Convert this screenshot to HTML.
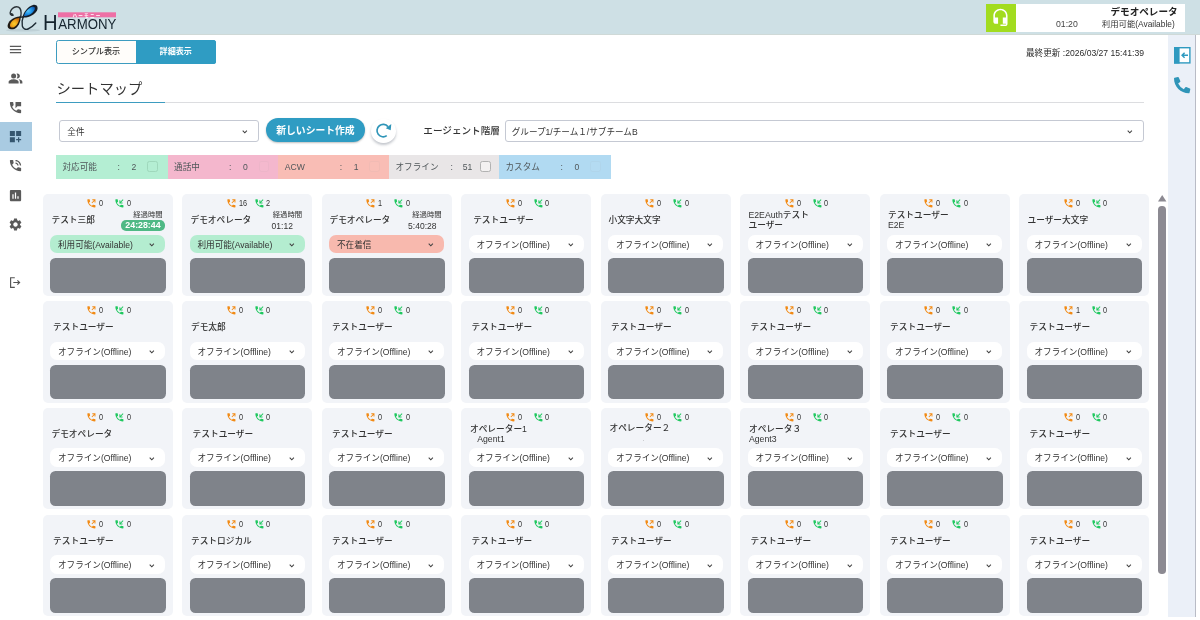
<!DOCTYPE html><html lang="ja"><head><meta charset="utf-8"><title>シートマップ</title><style>
*{box-sizing:border-box;margin:0;padding:0}
html,body{width:1200px;height:620px;overflow:hidden;background:#fff}
body{will-change:transform;position:relative;font-family:"Liberation Sans","Noto Sans CJK JP",sans-serif;color:#333;font-size:8.75px;line-height:1.2}
.abs,.ic{position:absolute}
.ic{display:block;overflow:visible}
.t{position:absolute;white-space:nowrap;line-height:1}
#hdr{left:0;top:0;width:1200px;height:35px;background:#cee0e5;border-bottom:1px solid #cfd9d7}
#side{left:0;top:35px;width:32px;height:585px;background:#fff}
#act{left:0;top:122px;width:32px;height:29px;background:#a9cbe2}
#rp{left:1168px;top:35px;width:28px;height:582px;background:#ebf0f8;border-right:1.5px solid #b9bcc6}
.card{position:absolute;width:129.8px;height:101.5px;background:#f2f4f8;border-radius:5px}
.in{position:absolute;left:2.2px;top:0;width:126px;height:101px}
.sel{position:absolute;left:5.5px;top:40.5px;width:115px;height:18.6px;border-radius:7px;background:#fff}
.sel.g{background:#b4edd0}
.sel.r{background:#f8b9ae}
.sel .t{left:7.5px;top:6.1px;font-size:8.6px}
.box{position:absolute;left:5.5px;top:63.6px;width:115.4px;height:34.6px;border-radius:5.5px;background:#7f838a}
.nm{position:absolute;top:15.6px;height:21px;display:flex;align-items:center;font-size:8.7px;font-weight:500;line-height:10.2px;white-space:nowrap;margin-left:.5px}
.cnt{position:absolute;top:5.1px;font-size:8.5px;line-height:8.5px;color:#333;transform:scaleX(.86);transform-origin:0 50%}
.chev{position:absolute}
.seg{position:absolute;top:154.8px;height:24px}
.seg .t{top:8px;font-size:8.6px;color:#50575a}
.cb{position:absolute;top:6.6px;width:10.6px;height:10.4px;border:1px solid #b2b2b2;border-radius:2.4px;background:#f3f1f1}
</style></head><body>
<div id="hdr" class="abs"></div>
<svg class="ic" style="left:0;top:0;width:130px;height:35px" viewBox="0 0 130 35">
<defs>
<radialGradient id="gb" cx=".38" cy=".45" r=".7"><stop offset="0" stop-color="#5cc4f6"/><stop offset=".45" stop-color="#2196e8"/><stop offset="1" stop-color="#0b4fa8"/></radialGradient>
<radialGradient id="go" cx=".45" cy=".6" r=".65"><stop offset="0" stop-color="#f9cf2e"/><stop offset=".5" stop-color="#f0a318"/><stop offset="1" stop-color="#c8680c"/></radialGradient>
</defs>
<ellipse cx="23" cy="30.200" rx="17" ry="1.400" fill="#aebfc7" opacity=".5"/>
<path d="M20.700 16.700C16 15.900 8.800 19.700 7.700 25C7 29.100 11 30.100 14.300 28.900C18 27.500 20.900 21.500 20.700 16.700Z" fill="#1f1a14"/>
<path d="M19.400 18.100C16 17.900 11 20.800 10 24.700C9.500 27.400 11.900 27.900 14 27.200C16.700 26.100 19.200 21.800 19.400 18.100Z" fill="url(#go)"/>
<path d="M13.200 15.100C11.600 15.600 9.900 14.600 10.200 12.500C10.700 9.500 13.500 6.700 16.500 6.700C19.600 6.700 21.100 9.500 21.100 13C21.100 15 20.800 16.300 20.400 17.200" fill="none" stroke="#2a3237" stroke-width="1.400" stroke-linecap="round"/>
<ellipse cx="11.700" cy="14.300" rx="1.700" ry="1.250" transform="rotate(25 11.700 14.300)" fill="#2a3237"/>
<path d="M22.500 17.400C23 12.500 28 6.200 33 4.900C37.200 4.100 38.400 7.500 37 10.400C35.200 14.100 29 18.100 22.500 17.400Z" fill="#141c26"/>
<path d="M23.900 16.100C24.700 12.500 28.400 7.900 32.300 6.800C34.900 6.200 35.500 8.100 34.500 10C33.100 12.900 28.800 16.100 23.900 16.100Z" fill="url(#gb)"/>
<path d="M23.300 16.500C22.300 19 21.600 23 22.300 26C23 28.800 25.500 30 28 29C31 27.800 33.800 25.300 35.800 23" fill="none" stroke="#1d2a33" stroke-width="1.350" stroke-linecap="round"/>
<path d="M19.500 17.200L23.800 17" fill="none" stroke="#1d2226" stroke-width="1.300"/>
<rect x="58" y="12.3" width="58" height="5" fill="#ee6fa5"/>
<text x="87" y="16.6" font-size="4.6" font-weight="700" fill="#fff" text-anchor="middle" font-family='"Liberation Sans","Noto Sans CJK JP",sans-serif' letter-spacing="1.2">ハーモニー</text>
<text x="43" y="29.700" font-size="22.800" fill="#14232d" font-family='"Liberation Sans",sans-serif' textLength="14.6" lengthAdjust="spacingAndGlyphs">H</text>
<text x="58.300" y="29.400" font-size="14.400" fill="#14232d" font-family='"Liberation Sans",sans-serif' textLength="58" lengthAdjust="spacingAndGlyphs">ARMONY</text>
</svg>
<div class="abs" style="left:986px;top:4.2px;width:199px;height:27.4px;background:#fff"></div>
<div class="abs" style="left:986px;top:4.2px;width:30px;height:27.4px;background:#a2dc1f"></div>
<svg class="ic" style="left:991.450px;top:8.000px;width:18.900px;height:18.900px" viewBox="0 0 24 24"><path fill="#fff" d="M12 1c-4.970 0-9 4.030-9 9v7c0 1.660 1.340 3 3 3h3v-8H5v-2c0-3.870 3.130-7 7-7s7 3.130 7 7v2h-4v8h4v1h-7v2h6c1.660 0 3-1.340 3-3V10c0-4.970-4.030-9-9-9z"/></svg>
<div class="t" style="right:22.400px;top:6.900px;font-size:9.600px;font-weight:700;color:#222">デモオペレータ</div>
<div class="t" style="right:25.300px;top:20.200px;font-size:8.400px;color:#333">利用可能(Available)</div>
<div class="t" style="left:1056px;top:20px;font-size:8.700px;color:#444">01:20</div>
<div id="side" class="abs"></div><div id="act" class="abs"></div>
<svg class="ic" style="left:7.50px;top:41.70px;width:15px;height:15px" viewBox="0 0 24 24"><path fill="#5a5a5a" d="M3 18h18v-2H3v2zm0-5h18v-2H3v2zm0-7v2h18V6H3z"/></svg>
<svg class="ic" style="left:7.50px;top:70.70px;width:15px;height:15px" viewBox="0 0 24 24"><path fill="#5a5a5a" d="M16.67 13.13C18.04 14.06 19 15.32 19 17v3h4v-3c0-2.18-3.57-3.47-6.33-3.87zM9 4a4 4 0 1 0 0 8 4 4 0 0 0 0-8zM15 12c2.21 0 4-1.79 4-4s-1.79-4-4-4c-.47 0-.91.1-1.33.24a5.98 5.98 0 0 1 0 7.52c.42.14.86.24 1.33.24zM9 13c-2.67 0-8 1.34-8 4v3h16v-3c0-2.66-5.33-4-8-4z"/></svg>
<svg class="ic" style="left:8.00px;top:99.70px;width:15px;height:15px" viewBox="0 0 24 24"><path fill="#5a5a5a" d="M20 15.5c-1.250 0-2.450-.2-3.570-.57-.35-.11-.74-.03-1.020.24l-2.200 2.200c-2.830-1.440-5.150-3.750-6.590-6.580l2.200-2.210c.28-.27.36-.66.25-1.010C8.700 6.450 8.500 5.250 8.500 4c0-.55-.45-1-1-1H4c-.55 0-1 .45-1 1 0 9.390 7.610 17 17 17 .55 0 1-.45 1-1v-3.500c0-.55-.45-1-1-1zM12 3v10l3-3h6V3h-9z"/></svg>
<svg class="ic" style="left:7.50px;top:129.30px;width:15px;height:15px" viewBox="0 0 24 24"><path fill="#35566f" d="M3 3h8v8H3zm10 0h8v8h-8zM3 13h8v8H3zm15 0h-2v3h-3v2h3v3h2v-3h3v-2h-3z"/></svg>
<svg class="ic" style="left:7.50px;top:158.00px;width:15px;height:15px" viewBox="0 0 24 24"><path fill="#5a5a5a" d="M20 15.5c-1.250 0-2.450-.2-3.570-.57-.35-.11-.74-.03-1.020.24l-2.200 2.200c-2.830-1.440-5.150-3.750-6.590-6.590l2.200-2.210c.28-.26.36-.65.25-1C8.700 6.450 8.500 5.250 8.500 4c0-.55-.45-1-1-1H4c-.55 0-1 .45-1 1 0 9.390 7.610 17 17 17 .55 0 1-.45 1-1v-3.500c0-.55-.45-1-1-1zM19 12h2c0-4.970-4.030-9-9-9v2c3.870 0 7 3.130 7 7zm-4 0h2c0-2.760-2.240-5-5-5v2c1.660 0 3 1.340 3 3z"/></svg>
<svg class="ic" style="left:7.50px;top:187.50px;width:15px;height:15px" viewBox="0 0 24 24"><path fill="#5a5a5a" d="M19 3H5c-1.100 0-2 .9-2 2v14c0 1.100.9 2 2 2h14c1.100 0 2-.9 2-2V5c0-1.100-.9-2-2-2zM9 17H7v-7h2v7zm4 0h-2V7h2v10zm4 0h-2v-4h2v4z"/></svg>
<svg class="ic" style="left:7.60px;top:216.50px;width:15px;height:15px" viewBox="0 0 24 24"><path fill="#5a5a5a" d="M19.14 12.94c.04-.3.06-.61.06-.94 0-.32-.02-.64-.07-.94l2.030-1.580c.18-.14.23-.41.12-.61l-1.920-3.320c-.12-.22-.37-.29-.59-.22l-2.390.96c-.5-.38-1.030-.7-1.620-.94l-.36-2.540c-.04-.24-.24-.41-.48-.41h-3.840c-.24 0-.43.17-.47.41l-.36 2.540c-.59.24-1.130.57-1.620.94l-2.390-.96c-.22-.08-.47 0-.59.22L2.740 8.870c-.12.21-.08.47.12.61l2.030 1.580c-.05.3-.09.63-.09.94s.02.64.07.94l-2.030 1.580c-.18.14-.23.41-.12.61l1.920 3.320c.12.22.37.29.59.22l2.390-.96c.5.38 1.030.7 1.620.94l.36 2.540c.05.24.24.41.48.41h3.840c.24 0 .44-.17.47-.41l.36-2.540c.59-.24 1.130-.56 1.620-.94l2.390.96c.22.08.47 0 .59-.22l1.920-3.320c.12-.22.07-.47-.12-.61l-2.010-1.580zM12 15.600c-1.980 0-3.600-1.620-3.600-3.600s1.620-3.600 3.600-3.600 3.600 1.620 3.600 3.600-1.620 3.600-3.600 3.600z"/></svg>
<svg class="ic" style="left:8.500px;top:275.500px;width:13px;height:13px" viewBox="0 0 13 13"><path d="M5.800 1.700H1.600v9.600h4.200M4.300 6.500h6.200M8.400 4.400l2.200 2.100-2.200 2.100" fill="none" stroke="#555" stroke-width="1.150"/></svg>
<div id="rp" class="abs"></div>
<svg class="ic" style="left:1173.800px;top:47.400px;width:16.600px;height:16.600px" viewBox="0 0 16.600 16.600"><rect x=".7" y=".7" width="15.200" height="15.200" fill="#fff" stroke="#2f9ac0" stroke-width="1.400"/><rect x="0" y="0" width="5.600" height="16.600" fill="#2f9ac0"/><path d="M14 8.300H8.300M10.600 5.800L8.100 8.300l2.500 2.500" fill="none" stroke="#2f9ac0" stroke-width="1.500"/></svg>
<svg class="ic" style="left:1173.900px;top:76.500px;width:16.300px;height:16.300px" viewBox="0 0 512 512"><path fill="#2f95b8" d="M497.390 361.800l-112-48a24 24 0 0 0-28 6.900l-49.600 60.600A370.660 370.660 0 0 1 130.600 204.110l60.600-49.600a23.940 23.940 0 0 0 6.900-28l-48-112A24.160 24.160 0 0 0 122.600.610l-104 24A24 24 0 0 0 0 48c0 256.500 207.900 464 464 464a24 24 0 0 0 23.400-18.600l24-104a24.290 24.290 0 0 0-14.010-27.600z"/></svg>
<div class="abs" style="left:56px;top:40px;width:159.500px;height:24px;border:1px solid #3d9cc0;border-radius:2.500px;background:#fffdfa"></div>
<div class="abs" style="left:136px;top:40px;width:79.500px;height:24px;background:#2f9cc3;border-radius:0 2.500px 2.500px 0"></div>
<div class="t" style="left:56px;width:80px;text-align:center;top:47.700px;font-size:8.150px;font-weight:500;color:#333">シンプル表示</div>
<div class="t" style="left:136px;width:79.500px;text-align:center;top:47.700px;font-size:8.100px;font-weight:700;color:#fff">詳細表示</div>
<div class="t" style="right:56px;top:48.800px;font-size:8.600px;color:#2c2c2c">最終更新 :2026/03/27 15:41:39</div>
<div class="t" style="left:56.500px;top:82px;font-size:14.300px;color:#333">シートマップ</div>
<div class="abs" style="left:56px;top:101.900px;width:1088px;height:1.200px;background:#dcdde0"></div>
<div class="abs" style="left:56px;top:101.600px;width:109px;height:1.600px;background:#3d9cc0"></div>
<div class="abs" style="left:59.300px;top:120px;width:200px;height:21.600px;border:1px solid #c5c9d3;border-radius:3px;background:#fff"></div>
<div class="t" style="left:67.300px;top:127.600px;font-size:8.600px;color:#333">全件</div>
<svg class="ic" style="left:242px;top:130.3px;width:5.600px;height:3.600px" viewBox="0 0 5.600 3.600"><path d="M.7.700l2.100 2.100L4.900.700" fill="none" stroke="#444" stroke-width="1.100"/></svg>
<div class="abs" style="left:265.700px;top:118.400px;width:99.500px;height:23.500px;border-radius:12px;background:#2f9cc3;box-shadow:0 1px 2px rgba(0,0,0,.25)"></div>
<div class="t" style="left:265.700px;width:99.500px;text-align:center;top:126.200px;font-size:9.800px;font-weight:700;color:#fff">新しいシート作成</div>
<div class="abs" style="left:371.400px;top:119.300px;width:24.200px;height:23.600px;border-radius:50%;background:#fff;box-shadow:0 2px 2.500px rgba(60,70,90,.3)"></div>
<svg class="ic" style="left:371px;top:119px;width:25px;height:25px" viewBox="371 119 25 25"><path d="M387.950 126.600A6.200 6.200 0 1 0 386.760 135.680" fill="none" stroke="#2f95b8" stroke-width="1.650"/><path d="M391.300 124.100L390.700 130.300L385.800 128.300z" fill="#2f95b8"/></svg>
<div class="t" style="left:423.300px;top:126px;font-size:9.600px;font-weight:500;color:#333">エージェント階層</div>
<div class="abs" style="left:505px;top:120px;width:639px;height:21.600px;border:1px solid #c5c9d3;border-radius:3px;background:#fff"></div>
<div class="t" style="left:511.700px;top:127.600px;font-size:8.600px;color:#333">グループ1/チーム１/サブチームB</div>
<svg class="ic" style="left:1127.2px;top:130.3px;width:5.600px;height:3.600px" viewBox="0 0 5.600 3.600"><path d="M.7.700l2.100 2.100L4.900.700" fill="none" stroke="#444" stroke-width="1.100"/></svg>
<div class="seg" style="left:56px;width:111.6px;background:#b4eed3">
<div class="t" style="left:6.500px">対応可能</div><div class="t" style="left:61.500px">:</div>
<div class="t" style="left:75.500px">2</div>
<div class="cb" style="left:91px;border-color:#9fd8bc;background:transparent"></div>
</div>
<div class="seg" style="left:167.6px;width:110.6px;background:#f4b7cd">
<div class="t" style="left:6.500px">通話中</div><div class="t" style="left:61.500px">:</div>
<div class="t" style="left:75.500px">0</div>
<div class="cb" style="left:91px;border-color:rgba(120,120,120,.06);background:rgba(255,255,255,.04)"></div>
</div>
<div class="seg" style="left:278.2px;width:110.8px;background:#f9bdb5">
<div class="t" style="left:6.500px">ACW</div><div class="t" style="left:61.500px">:</div>
<div class="t" style="left:75.500px">1</div>
<div class="cb" style="left:91px;border-color:rgba(120,120,120,.06);background:rgba(255,255,255,.04)"></div>
</div>
<div class="seg" style="left:389px;width:110px;background:#e9e6e7">
<div class="t" style="left:6.500px">オフライン</div><div class="t" style="left:61.500px">:</div>
<div class="t" style="left:73.800px">51</div>
<div class="cb" style="left:91px"></div>
</div>
<div class="seg" style="left:499px;width:112.3px;background:#b1daf2">
<div class="t" style="left:6.500px">カスタム</div><div class="t" style="left:61.500px">:</div>
<div class="t" style="left:75.500px">0</div>
<div class="cb" style="left:91px;border-color:rgba(120,120,120,.06);background:rgba(255,255,255,.04)"></div>
</div>
<div class="card" style="left:42.80px;top:194.40px"><div class="in">
<svg class="ic" style="left:41.5px;top:3.900px;width:10.800px;height:10.800px" viewBox="0 0 24 24"><path fill="#f28a14" d="M6.620 10.790c1.440 2.830 3.760 5.140 6.590 6.590l2.200-2.200c.27-.27.67-.36 1.020-.24 1.120.37 2.330.57 3.570.57.55 0 1 .45 1 1V20c0 .55-.45 1-1 1-9.390 0-17-7.610-17-17 0-.55.45-1 1-1h3.500c.55 0 1 .45 1 1 0 1.250.2 2.450.57 3.570.11.35.03.74-.25 1.020l-2.200 2.200z"/><path fill="#f28a14" d="M14 3h7v7h-2V6.400l-5.300 5.300-1.400-1.400L17.600 5H14z"/></svg>
<div class="cnt" style="left:54.300px">0</div>
<svg class="ic" style="left:69.3px;top:3.900px;width:10.800px;height:10.800px" viewBox="0 0 24 24"><path fill="#1fc85f" d="M6.620 10.790c1.440 2.830 3.760 5.140 6.590 6.590l2.200-2.200c.27-.27.67-.36 1.020-.24 1.120.37 2.330.57 3.570.57.55 0 1 .45 1 1V20c0 .55-.45 1-1 1-9.390 0-17-7.610-17-17 0-.55.45-1 1-1h3.500c.55 0 1 .45 1 1 0 1.250.2 2.450.57 3.570.11.35.03.74-.25 1.020l-2.200 2.200z"/><path fill="#1fc85f" d="M21 4.400L19.600 3 14 8.600V5h-2v7h7v-2h-3.600z"/></svg>
<div class="cnt" style="left:81.600px">0</div>
<div class="nm" style="left:6px"><div>テスト三郎</div></div>
<div class="t" style="left:73px;width:60px;text-align:center;top:16.800px;font-size:7.400px;color:#333">経過時間</div>
<div class="t" style="left:75.800px;width:44.400px;height:10.200px;top:26px;border-radius:5.100px;background:#4fb985;color:#fff;font-weight:700;font-size:8.800px;text-align:center;line-height:10.200px">24:28:44</div>
<div class="sel g"><div class="t">利用可能(Available)</div><svg class="ic" style="left:98.8px;top:8.5px;width:5.600px;height:3.600px" viewBox="0 0 5.600 3.600"><path d="M.7.700l2.100 2.100L4.900.700" fill="none" stroke="#444" stroke-width="1.100"/></svg></div>
<div class="box"></div></div></div>
<div class="card" style="left:182.30px;top:194.40px"><div class="in">
<svg class="ic" style="left:41.5px;top:3.900px;width:10.800px;height:10.800px" viewBox="0 0 24 24"><path fill="#f28a14" d="M6.620 10.790c1.440 2.830 3.760 5.140 6.590 6.590l2.200-2.200c.27-.27.67-.36 1.020-.24 1.120.37 2.330.57 3.570.57.55 0 1 .45 1 1V20c0 .55-.45 1-1 1-9.390 0-17-7.610-17-17 0-.55.45-1 1-1h3.500c.55 0 1 .45 1 1 0 1.250.2 2.450.57 3.570.11.35.03.74-.25 1.020l-2.200 2.200z"/><path fill="#f28a14" d="M14 3h7v7h-2V6.400l-5.300 5.300-1.400-1.400L17.600 5H14z"/></svg>
<div class="cnt" style="left:54.300px">16</div>
<svg class="ic" style="left:69.3px;top:3.900px;width:10.800px;height:10.800px" viewBox="0 0 24 24"><path fill="#1fc85f" d="M6.620 10.790c1.440 2.830 3.760 5.140 6.590 6.590l2.200-2.200c.27-.27.67-.36 1.020-.24 1.120.37 2.330.57 3.570.57.55 0 1 .45 1 1V20c0 .55-.45 1-1 1-9.390 0-17-7.610-17-17 0-.55.45-1 1-1h3.500c.55 0 1 .45 1 1 0 1.250.2 2.450.57 3.570.11.35.03.74-.25 1.020l-2.200 2.200z"/><path fill="#1fc85f" d="M21 4.400L19.600 3 14 8.600V5h-2v7h7v-2h-3.600z"/></svg>
<div class="cnt" style="left:81.600px">2</div>
<div class="nm" style="left:5.5px"><div>デモオペレータ</div></div>
<div class="t" style="left:73px;width:60px;text-align:center;top:16.800px;font-size:7.400px;color:#333">経過時間</div>
<div class="t" style="left:68px;width:60px;text-align:center;top:26.200px;font-size:9.800px;color:#333"><span style="display:inline-block;transform:scaleX(.87)">01:12</span></div>
<div class="sel g"><div class="t">利用可能(Available)</div><svg class="ic" style="left:98.8px;top:8.5px;width:5.600px;height:3.600px" viewBox="0 0 5.600 3.600"><path d="M.7.700l2.100 2.100L4.900.700" fill="none" stroke="#444" stroke-width="1.100"/></svg></div>
<div class="box"></div></div></div>
<div class="card" style="left:321.80px;top:194.40px"><div class="in">
<svg class="ic" style="left:41.5px;top:3.900px;width:10.800px;height:10.800px" viewBox="0 0 24 24"><path fill="#f28a14" d="M6.620 10.790c1.440 2.830 3.760 5.140 6.590 6.590l2.200-2.200c.27-.27.67-.36 1.020-.24 1.120.37 2.330.57 3.570.57.55 0 1 .45 1 1V20c0 .55-.45 1-1 1-9.390 0-17-7.610-17-17 0-.55.45-1 1-1h3.500c.55 0 1 .45 1 1 0 1.250.2 2.450.57 3.570.11.35.03.74-.25 1.020l-2.200 2.200z"/><path fill="#f28a14" d="M14 3h7v7h-2V6.400l-5.300 5.300-1.400-1.400L17.600 5H14z"/></svg>
<div class="cnt" style="left:54.300px">1</div>
<svg class="ic" style="left:69.3px;top:3.900px;width:10.800px;height:10.800px" viewBox="0 0 24 24"><path fill="#1fc85f" d="M6.620 10.790c1.440 2.830 3.760 5.140 6.590 6.590l2.200-2.200c.27-.27.67-.36 1.020-.24 1.120.37 2.330.57 3.570.57.55 0 1 .45 1 1V20c0 .55-.45 1-1 1-9.390 0-17-7.610-17-17 0-.55.45-1 1-1h3.500c.55 0 1 .45 1 1 0 1.250.2 2.450.57 3.570.11.35.03.74-.25 1.020l-2.200 2.200z"/><path fill="#1fc85f" d="M21 4.400L19.600 3 14 8.600V5h-2v7h7v-2h-3.600z"/></svg>
<div class="cnt" style="left:81.600px">0</div>
<div class="nm" style="left:5px"><div>デモオペレータ</div></div>
<div class="t" style="left:73px;width:60px;text-align:center;top:16.800px;font-size:7.400px;color:#333">経過時間</div>
<div class="t" style="left:68px;width:60px;text-align:center;top:26.200px;font-size:9.800px;color:#333"><span style="display:inline-block;transform:scaleX(.87)">5:40:28</span></div>
<div class="sel r"><div class="t">不在着信</div><svg class="ic" style="left:98.8px;top:8.5px;width:5.600px;height:3.600px" viewBox="0 0 5.600 3.600"><path d="M.7.700l2.100 2.100L4.900.700" fill="none" stroke="#444" stroke-width="1.100"/></svg></div>
<div class="box"></div></div></div>
<div class="card" style="left:461.30px;top:194.40px"><div class="in">
<svg class="ic" style="left:41.5px;top:3.900px;width:10.800px;height:10.800px" viewBox="0 0 24 24"><path fill="#f28a14" d="M6.620 10.790c1.440 2.830 3.760 5.140 6.590 6.590l2.200-2.200c.27-.27.67-.36 1.020-.24 1.120.37 2.330.57 3.570.57.55 0 1 .45 1 1V20c0 .55-.45 1-1 1-9.390 0-17-7.610-17-17 0-.55.45-1 1-1h3.500c.55 0 1 .45 1 1 0 1.250.2 2.450.57 3.570.11.35.03.74-.25 1.020l-2.200 2.200z"/><path fill="#f28a14" d="M14 3h7v7h-2V6.400l-5.300 5.300-1.400-1.400L17.600 5H14z"/></svg>
<div class="cnt" style="left:54.300px">0</div>
<svg class="ic" style="left:69.3px;top:3.900px;width:10.800px;height:10.800px" viewBox="0 0 24 24"><path fill="#1fc85f" d="M6.620 10.790c1.440 2.830 3.760 5.140 6.590 6.590l2.200-2.200c.27-.27.67-.36 1.020-.24 1.120.37 2.330.57 3.570.57.55 0 1 .45 1 1V20c0 .55-.45 1-1 1-9.390 0-17-7.610-17-17 0-.55.45-1 1-1h3.500c.55 0 1 .45 1 1 0 1.250.2 2.450.57 3.570.11.35.03.74-.25 1.020l-2.200 2.200z"/><path fill="#1fc85f" d="M21 4.400L19.600 3 14 8.600V5h-2v7h7v-2h-3.600z"/></svg>
<div class="cnt" style="left:81.600px">0</div>
<div class="nm" style="left:9.2px"><div>テストユーザー</div></div>
<div class="sel "><div class="t">オフライン(Offline)</div><svg class="ic" style="left:98.8px;top:8.5px;width:5.600px;height:3.600px" viewBox="0 0 5.600 3.600"><path d="M.7.700l2.100 2.100L4.900.700" fill="none" stroke="#444" stroke-width="1.100"/></svg></div>
<div class="box"></div></div></div>
<div class="card" style="left:600.80px;top:194.40px"><div class="in">
<svg class="ic" style="left:41.5px;top:3.900px;width:10.800px;height:10.800px" viewBox="0 0 24 24"><path fill="#f28a14" d="M6.620 10.790c1.440 2.830 3.760 5.140 6.590 6.590l2.200-2.200c.27-.27.67-.36 1.020-.24 1.120.37 2.330.57 3.570.57.55 0 1 .45 1 1V20c0 .55-.45 1-1 1-9.390 0-17-7.610-17-17 0-.55.45-1 1-1h3.500c.55 0 1 .45 1 1 0 1.250.2 2.450.57 3.570.11.35.03.74-.25 1.020l-2.200 2.200z"/><path fill="#f28a14" d="M14 3h7v7h-2V6.400l-5.300 5.300-1.400-1.400L17.600 5H14z"/></svg>
<div class="cnt" style="left:54.300px">0</div>
<svg class="ic" style="left:69.3px;top:3.900px;width:10.800px;height:10.800px" viewBox="0 0 24 24"><path fill="#1fc85f" d="M6.620 10.790c1.440 2.830 3.760 5.140 6.590 6.590l2.200-2.200c.27-.27.67-.36 1.020-.24 1.120.37 2.330.57 3.570.57.55 0 1 .45 1 1V20c0 .55-.45 1-1 1-9.390 0-17-7.610-17-17 0-.55.45-1 1-1h3.500c.55 0 1 .45 1 1 0 1.250.2 2.450.57 3.570.11.35.03.74-.25 1.020l-2.200 2.200z"/><path fill="#1fc85f" d="M21 4.400L19.600 3 14 8.600V5h-2v7h7v-2h-3.600z"/></svg>
<div class="cnt" style="left:81.600px">0</div>
<div class="nm" style="left:5px"><div>小文字大文字</div></div>
<div class="sel "><div class="t">オフライン(Offline)</div><svg class="ic" style="left:98.8px;top:8.5px;width:5.600px;height:3.600px" viewBox="0 0 5.600 3.600"><path d="M.7.700l2.100 2.100L4.900.700" fill="none" stroke="#444" stroke-width="1.100"/></svg></div>
<div class="box"></div></div></div>
<div class="card" style="left:740.30px;top:194.40px"><div class="in">
<svg class="ic" style="left:41.5px;top:3.900px;width:10.800px;height:10.800px" viewBox="0 0 24 24"><path fill="#f28a14" d="M6.620 10.790c1.440 2.830 3.760 5.140 6.590 6.590l2.200-2.200c.27-.27.67-.36 1.020-.24 1.120.37 2.330.57 3.570.57.55 0 1 .45 1 1V20c0 .55-.45 1-1 1-9.390 0-17-7.610-17-17 0-.55.45-1 1-1h3.500c.55 0 1 .45 1 1 0 1.250.2 2.450.57 3.570.11.35.03.74-.25 1.020l-2.200 2.200z"/><path fill="#f28a14" d="M14 3h7v7h-2V6.400l-5.300 5.300-1.400-1.400L17.600 5H14z"/></svg>
<div class="cnt" style="left:54.300px">0</div>
<svg class="ic" style="left:69.3px;top:3.900px;width:10.800px;height:10.800px" viewBox="0 0 24 24"><path fill="#1fc85f" d="M6.620 10.790c1.440 2.830 3.760 5.140 6.590 6.590l2.200-2.200c.27-.27.67-.36 1.020-.24 1.120.37 2.330.57 3.570.57.55 0 1 .45 1 1V20c0 .55-.45 1-1 1-9.390 0-17-7.610-17-17 0-.55.45-1 1-1h3.500c.55 0 1 .45 1 1 0 1.250.2 2.450.57 3.570.11.35.03.74-.25 1.020l-2.200 2.200z"/><path fill="#1fc85f" d="M21 4.400L19.600 3 14 8.600V5h-2v7h7v-2h-3.600z"/></svg>
<div class="cnt" style="left:81.600px">0</div>
<div class="nm" style="left:5.5px"><div>E2EAuthテスト<br>ユーザー</div></div>
<div class="sel "><div class="t">オフライン(Offline)</div><svg class="ic" style="left:98.8px;top:8.5px;width:5.600px;height:3.600px" viewBox="0 0 5.600 3.600"><path d="M.7.700l2.100 2.100L4.900.700" fill="none" stroke="#444" stroke-width="1.100"/></svg></div>
<div class="box"></div></div></div>
<div class="card" style="left:879.80px;top:194.40px"><div class="in">
<svg class="ic" style="left:41.5px;top:3.900px;width:10.800px;height:10.800px" viewBox="0 0 24 24"><path fill="#f28a14" d="M6.620 10.790c1.440 2.830 3.760 5.140 6.590 6.590l2.200-2.200c.27-.27.67-.36 1.020-.24 1.120.37 2.330.57 3.570.57.55 0 1 .45 1 1V20c0 .55-.45 1-1 1-9.390 0-17-7.610-17-17 0-.55.45-1 1-1h3.500c.55 0 1 .45 1 1 0 1.250.2 2.450.57 3.570.11.35.03.74-.25 1.020l-2.200 2.200z"/><path fill="#f28a14" d="M14 3h7v7h-2V6.400l-5.300 5.300-1.400-1.400L17.600 5H14z"/></svg>
<div class="cnt" style="left:54.300px">0</div>
<svg class="ic" style="left:69.3px;top:3.900px;width:10.800px;height:10.800px" viewBox="0 0 24 24"><path fill="#1fc85f" d="M6.620 10.790c1.440 2.830 3.760 5.140 6.590 6.590l2.200-2.200c.27-.27.67-.36 1.020-.24 1.120.37 2.330.57 3.570.57.55 0 1 .45 1 1V20c0 .55-.45 1-1 1-9.390 0-17-7.610-17-17 0-.55.45-1 1-1h3.500c.55 0 1 .45 1 1 0 1.250.2 2.450.57 3.570.11.35.03.74-.25 1.020l-2.200 2.200z"/><path fill="#1fc85f" d="M21 4.400L19.600 3 14 8.600V5h-2v7h7v-2h-3.600z"/></svg>
<div class="cnt" style="left:81.600px">0</div>
<div class="nm" style="left:5.5px"><div>テストユーザー<br>E2E</div></div>
<div class="sel "><div class="t">オフライン(Offline)</div><svg class="ic" style="left:98.8px;top:8.5px;width:5.600px;height:3.600px" viewBox="0 0 5.600 3.600"><path d="M.7.700l2.100 2.100L4.900.700" fill="none" stroke="#444" stroke-width="1.100"/></svg></div>
<div class="box"></div></div></div>
<div class="card" style="left:1019.30px;top:194.40px"><div class="in">
<svg class="ic" style="left:41.5px;top:3.900px;width:10.800px;height:10.800px" viewBox="0 0 24 24"><path fill="#f28a14" d="M6.620 10.790c1.440 2.830 3.760 5.140 6.590 6.590l2.200-2.200c.27-.27.67-.36 1.020-.24 1.120.37 2.330.57 3.570.57.55 0 1 .45 1 1V20c0 .55-.45 1-1 1-9.390 0-17-7.610-17-17 0-.55.45-1 1-1h3.500c.55 0 1 .45 1 1 0 1.250.2 2.450.57 3.570.11.35.03.74-.25 1.020l-2.200 2.200z"/><path fill="#f28a14" d="M14 3h7v7h-2V6.400l-5.300 5.300-1.400-1.400L17.600 5H14z"/></svg>
<div class="cnt" style="left:54.300px">0</div>
<svg class="ic" style="left:69.3px;top:3.900px;width:10.800px;height:10.800px" viewBox="0 0 24 24"><path fill="#1fc85f" d="M6.620 10.790c1.440 2.830 3.760 5.140 6.590 6.590l2.200-2.200c.27-.27.67-.36 1.020-.24 1.120.37 2.330.57 3.570.57.55 0 1 .45 1 1V20c0 .55-.45 1-1 1-9.390 0-17-7.610-17-17 0-.55.45-1 1-1h3.500c.55 0 1 .45 1 1 0 1.250.2 2.450.57 3.570.11.35.03.74-.25 1.020l-2.200 2.200z"/><path fill="#1fc85f" d="M21 4.400L19.600 3 14 8.600V5h-2v7h7v-2h-3.600z"/></svg>
<div class="cnt" style="left:81.600px">0</div>
<div class="nm" style="left:5.5px"><div>ユーザー大文字</div></div>
<div class="sel "><div class="t">オフライン(Offline)</div><svg class="ic" style="left:98.8px;top:8.5px;width:5.600px;height:3.600px" viewBox="0 0 5.600 3.600"><path d="M.7.700l2.100 2.100L4.900.700" fill="none" stroke="#444" stroke-width="1.100"/></svg></div>
<div class="box"></div></div></div>
<div class="card" style="left:42.80px;top:301.15px"><div class="in">
<svg class="ic" style="left:41.5px;top:3.900px;width:10.800px;height:10.800px" viewBox="0 0 24 24"><path fill="#f28a14" d="M6.620 10.790c1.440 2.830 3.760 5.140 6.590 6.590l2.200-2.200c.27-.27.67-.36 1.020-.24 1.120.37 2.330.57 3.570.57.55 0 1 .45 1 1V20c0 .55-.45 1-1 1-9.390 0-17-7.610-17-17 0-.55.45-1 1-1h3.500c.55 0 1 .45 1 1 0 1.250.2 2.450.57 3.570.11.35.03.74-.25 1.020l-2.200 2.200z"/><path fill="#f28a14" d="M14 3h7v7h-2V6.400l-5.300 5.300-1.400-1.400L17.600 5H14z"/></svg>
<div class="cnt" style="left:54.300px">0</div>
<svg class="ic" style="left:69.3px;top:3.900px;width:10.800px;height:10.800px" viewBox="0 0 24 24"><path fill="#1fc85f" d="M6.620 10.790c1.440 2.830 3.760 5.140 6.590 6.590l2.200-2.200c.27-.27.67-.36 1.020-.24 1.120.37 2.330.57 3.570.57.55 0 1 .45 1 1V20c0 .55-.45 1-1 1-9.390 0-17-7.610-17-17 0-.55.45-1 1-1h3.500c.55 0 1 .45 1 1 0 1.250.2 2.450.57 3.570.11.35.03.74-.25 1.020l-2.200 2.200z"/><path fill="#1fc85f" d="M21 4.400L19.600 3 14 8.600V5h-2v7h7v-2h-3.600z"/></svg>
<div class="cnt" style="left:81.600px">0</div>
<div class="nm" style="left:7.6px"><div>テストユーザー</div></div>
<div class="sel "><div class="t">オフライン(Offline)</div><svg class="ic" style="left:98.8px;top:8.5px;width:5.600px;height:3.600px" viewBox="0 0 5.600 3.600"><path d="M.7.700l2.100 2.100L4.900.700" fill="none" stroke="#444" stroke-width="1.100"/></svg></div>
<div class="box"></div></div></div>
<div class="card" style="left:182.30px;top:301.15px"><div class="in">
<svg class="ic" style="left:41.5px;top:3.900px;width:10.800px;height:10.800px" viewBox="0 0 24 24"><path fill="#f28a14" d="M6.620 10.790c1.440 2.830 3.760 5.140 6.590 6.590l2.200-2.200c.27-.27.67-.36 1.020-.24 1.120.37 2.330.57 3.570.57.55 0 1 .45 1 1V20c0 .55-.45 1-1 1-9.390 0-17-7.610-17-17 0-.55.45-1 1-1h3.500c.55 0 1 .45 1 1 0 1.250.2 2.450.57 3.570.11.35.03.74-.25 1.020l-2.200 2.200z"/><path fill="#f28a14" d="M14 3h7v7h-2V6.400l-5.300 5.300-1.400-1.400L17.600 5H14z"/></svg>
<div class="cnt" style="left:54.300px">0</div>
<svg class="ic" style="left:69.3px;top:3.900px;width:10.800px;height:10.800px" viewBox="0 0 24 24"><path fill="#1fc85f" d="M6.620 10.790c1.440 2.830 3.760 5.140 6.590 6.590l2.200-2.200c.27-.27.67-.36 1.020-.24 1.120.37 2.330.57 3.570.57.55 0 1 .45 1 1V20c0 .55-.45 1-1 1-9.390 0-17-7.610-17-17 0-.55.45-1 1-1h3.500c.55 0 1 .45 1 1 0 1.250.2 2.450.57 3.570.11.35.03.74-.25 1.020l-2.200 2.200z"/><path fill="#1fc85f" d="M21 4.400L19.600 3 14 8.600V5h-2v7h7v-2h-3.600z"/></svg>
<div class="cnt" style="left:81.600px">0</div>
<div class="nm" style="left:6px"><div>デモ太郎</div></div>
<div class="sel "><div class="t">オフライン(Offline)</div><svg class="ic" style="left:98.8px;top:8.5px;width:5.600px;height:3.600px" viewBox="0 0 5.600 3.600"><path d="M.7.700l2.100 2.100L4.900.700" fill="none" stroke="#444" stroke-width="1.100"/></svg></div>
<div class="box"></div></div></div>
<div class="card" style="left:321.80px;top:301.15px"><div class="in">
<svg class="ic" style="left:41.5px;top:3.900px;width:10.800px;height:10.800px" viewBox="0 0 24 24"><path fill="#f28a14" d="M6.620 10.790c1.440 2.830 3.760 5.140 6.590 6.590l2.200-2.200c.27-.27.67-.36 1.020-.24 1.120.37 2.330.57 3.570.57.55 0 1 .45 1 1V20c0 .55-.45 1-1 1-9.390 0-17-7.610-17-17 0-.55.45-1 1-1h3.500c.55 0 1 .45 1 1 0 1.250.2 2.450.57 3.570.11.35.03.74-.25 1.020l-2.200 2.200z"/><path fill="#f28a14" d="M14 3h7v7h-2V6.400l-5.300 5.300-1.400-1.400L17.600 5H14z"/></svg>
<div class="cnt" style="left:54.300px">0</div>
<svg class="ic" style="left:69.3px;top:3.900px;width:10.800px;height:10.800px" viewBox="0 0 24 24"><path fill="#1fc85f" d="M6.620 10.790c1.440 2.830 3.760 5.140 6.590 6.590l2.200-2.200c.27-.27.67-.36 1.020-.24 1.120.37 2.330.57 3.570.57.55 0 1 .45 1 1V20c0 .55-.45 1-1 1-9.390 0-17-7.610-17-17 0-.55.45-1 1-1h3.500c.55 0 1 .45 1 1 0 1.250.2 2.450.57 3.570.11.35.03.74-.25 1.020l-2.200 2.200z"/><path fill="#1fc85f" d="M21 4.400L19.600 3 14 8.600V5h-2v7h7v-2h-3.600z"/></svg>
<div class="cnt" style="left:81.600px">0</div>
<div class="nm" style="left:7.6px"><div>テストユーザー</div></div>
<div class="sel "><div class="t">オフライン(Offline)</div><svg class="ic" style="left:98.8px;top:8.5px;width:5.600px;height:3.600px" viewBox="0 0 5.600 3.600"><path d="M.7.700l2.100 2.100L4.900.700" fill="none" stroke="#444" stroke-width="1.100"/></svg></div>
<div class="box"></div></div></div>
<div class="card" style="left:461.30px;top:301.15px"><div class="in">
<svg class="ic" style="left:41.5px;top:3.900px;width:10.800px;height:10.800px" viewBox="0 0 24 24"><path fill="#f28a14" d="M6.620 10.790c1.440 2.830 3.760 5.140 6.590 6.590l2.200-2.200c.27-.27.67-.36 1.020-.24 1.120.37 2.330.57 3.570.57.55 0 1 .45 1 1V20c0 .55-.45 1-1 1-9.390 0-17-7.610-17-17 0-.55.45-1 1-1h3.500c.55 0 1 .45 1 1 0 1.250.2 2.450.57 3.570.11.35.03.74-.25 1.020l-2.200 2.200z"/><path fill="#f28a14" d="M14 3h7v7h-2V6.400l-5.300 5.300-1.400-1.400L17.600 5H14z"/></svg>
<div class="cnt" style="left:54.300px">0</div>
<svg class="ic" style="left:69.3px;top:3.900px;width:10.800px;height:10.800px" viewBox="0 0 24 24"><path fill="#1fc85f" d="M6.620 10.790c1.440 2.830 3.760 5.140 6.590 6.590l2.200-2.200c.27-.27.67-.36 1.020-.24 1.120.37 2.330.57 3.570.57.55 0 1 .45 1 1V20c0 .55-.45 1-1 1-9.390 0-17-7.610-17-17 0-.55.45-1 1-1h3.500c.55 0 1 .45 1 1 0 1.250.2 2.450.57 3.570.11.35.03.74-.25 1.020l-2.200 2.200z"/><path fill="#1fc85f" d="M21 4.400L19.600 3 14 8.600V5h-2v7h7v-2h-3.600z"/></svg>
<div class="cnt" style="left:81.600px">0</div>
<div class="nm" style="left:7.6px"><div>テストユーザー</div></div>
<div class="sel "><div class="t">オフライン(Offline)</div><svg class="ic" style="left:98.8px;top:8.5px;width:5.600px;height:3.600px" viewBox="0 0 5.600 3.600"><path d="M.7.700l2.100 2.100L4.900.700" fill="none" stroke="#444" stroke-width="1.100"/></svg></div>
<div class="box"></div></div></div>
<div class="card" style="left:600.80px;top:301.15px"><div class="in">
<svg class="ic" style="left:41.5px;top:3.900px;width:10.800px;height:10.800px" viewBox="0 0 24 24"><path fill="#f28a14" d="M6.620 10.790c1.440 2.830 3.760 5.140 6.590 6.590l2.200-2.200c.27-.27.67-.36 1.020-.24 1.120.37 2.330.57 3.570.57.55 0 1 .45 1 1V20c0 .55-.45 1-1 1-9.390 0-17-7.610-17-17 0-.55.45-1 1-1h3.500c.55 0 1 .45 1 1 0 1.250.2 2.450.57 3.570.11.35.03.74-.25 1.020l-2.200 2.200z"/><path fill="#f28a14" d="M14 3h7v7h-2V6.400l-5.300 5.300-1.400-1.400L17.600 5H14z"/></svg>
<div class="cnt" style="left:54.300px">0</div>
<svg class="ic" style="left:69.3px;top:3.900px;width:10.800px;height:10.800px" viewBox="0 0 24 24"><path fill="#1fc85f" d="M6.620 10.790c1.440 2.830 3.760 5.140 6.590 6.590l2.200-2.200c.27-.27.67-.36 1.020-.24 1.120.37 2.330.57 3.570.57.55 0 1 .45 1 1V20c0 .55-.45 1-1 1-9.390 0-17-7.610-17-17 0-.55.45-1 1-1h3.500c.55 0 1 .45 1 1 0 1.250.2 2.450.57 3.570.11.35.03.74-.25 1.020l-2.200 2.200z"/><path fill="#1fc85f" d="M21 4.400L19.600 3 14 8.600V5h-2v7h7v-2h-3.600z"/></svg>
<div class="cnt" style="left:81.600px">0</div>
<div class="nm" style="left:7.6px"><div>テストユーザー</div></div>
<div class="sel "><div class="t">オフライン(Offline)</div><svg class="ic" style="left:98.8px;top:8.5px;width:5.600px;height:3.600px" viewBox="0 0 5.600 3.600"><path d="M.7.700l2.100 2.100L4.900.700" fill="none" stroke="#444" stroke-width="1.100"/></svg></div>
<div class="box"></div></div></div>
<div class="card" style="left:740.30px;top:301.15px"><div class="in">
<svg class="ic" style="left:41.5px;top:3.900px;width:10.800px;height:10.800px" viewBox="0 0 24 24"><path fill="#f28a14" d="M6.620 10.790c1.440 2.830 3.760 5.140 6.590 6.590l2.200-2.200c.27-.27.67-.36 1.020-.24 1.120.37 2.330.57 3.570.57.55 0 1 .45 1 1V20c0 .55-.45 1-1 1-9.390 0-17-7.610-17-17 0-.55.45-1 1-1h3.500c.55 0 1 .45 1 1 0 1.250.2 2.450.57 3.570.11.35.03.74-.25 1.020l-2.200 2.200z"/><path fill="#f28a14" d="M14 3h7v7h-2V6.400l-5.300 5.300-1.400-1.400L17.600 5H14z"/></svg>
<div class="cnt" style="left:54.300px">0</div>
<svg class="ic" style="left:69.3px;top:3.900px;width:10.800px;height:10.800px" viewBox="0 0 24 24"><path fill="#1fc85f" d="M6.620 10.790c1.440 2.830 3.760 5.140 6.590 6.590l2.200-2.200c.27-.27.67-.36 1.020-.24 1.120.37 2.330.57 3.570.57.55 0 1 .45 1 1V20c0 .55-.45 1-1 1-9.390 0-17-7.610-17-17 0-.55.45-1 1-1h3.500c.55 0 1 .45 1 1 0 1.250.2 2.450.57 3.570.11.35.03.74-.25 1.020l-2.200 2.200z"/><path fill="#1fc85f" d="M21 4.400L19.600 3 14 8.600V5h-2v7h7v-2h-3.600z"/></svg>
<div class="cnt" style="left:81.600px">0</div>
<div class="nm" style="left:7.6px"><div>テストユーザー</div></div>
<div class="sel "><div class="t">オフライン(Offline)</div><svg class="ic" style="left:98.8px;top:8.5px;width:5.600px;height:3.600px" viewBox="0 0 5.600 3.600"><path d="M.7.700l2.100 2.100L4.900.700" fill="none" stroke="#444" stroke-width="1.100"/></svg></div>
<div class="box"></div></div></div>
<div class="card" style="left:879.80px;top:301.15px"><div class="in">
<svg class="ic" style="left:41.5px;top:3.900px;width:10.800px;height:10.800px" viewBox="0 0 24 24"><path fill="#f28a14" d="M6.620 10.790c1.440 2.830 3.760 5.140 6.590 6.590l2.200-2.200c.27-.27.67-.36 1.020-.24 1.120.37 2.330.57 3.570.57.55 0 1 .45 1 1V20c0 .55-.45 1-1 1-9.390 0-17-7.610-17-17 0-.55.45-1 1-1h3.500c.55 0 1 .45 1 1 0 1.250.2 2.450.57 3.570.11.35.03.74-.25 1.020l-2.200 2.200z"/><path fill="#f28a14" d="M14 3h7v7h-2V6.400l-5.300 5.300-1.400-1.400L17.600 5H14z"/></svg>
<div class="cnt" style="left:54.300px">0</div>
<svg class="ic" style="left:69.3px;top:3.900px;width:10.800px;height:10.800px" viewBox="0 0 24 24"><path fill="#1fc85f" d="M6.620 10.790c1.440 2.830 3.760 5.140 6.590 6.590l2.200-2.200c.27-.27.67-.36 1.020-.24 1.120.37 2.330.57 3.570.57.55 0 1 .45 1 1V20c0 .55-.45 1-1 1-9.390 0-17-7.610-17-17 0-.55.45-1 1-1h3.500c.55 0 1 .45 1 1 0 1.250.2 2.450.57 3.570.11.35.03.74-.25 1.020l-2.200 2.200z"/><path fill="#1fc85f" d="M21 4.400L19.600 3 14 8.600V5h-2v7h7v-2h-3.600z"/></svg>
<div class="cnt" style="left:81.600px">0</div>
<div class="nm" style="left:7.6px"><div>テストユーザー</div></div>
<div class="sel "><div class="t">オフライン(Offline)</div><svg class="ic" style="left:98.8px;top:8.5px;width:5.600px;height:3.600px" viewBox="0 0 5.600 3.600"><path d="M.7.700l2.100 2.100L4.900.700" fill="none" stroke="#444" stroke-width="1.100"/></svg></div>
<div class="box"></div></div></div>
<div class="card" style="left:1019.30px;top:301.15px"><div class="in">
<svg class="ic" style="left:41.5px;top:3.900px;width:10.800px;height:10.800px" viewBox="0 0 24 24"><path fill="#f28a14" d="M6.620 10.790c1.440 2.830 3.760 5.140 6.590 6.590l2.200-2.200c.27-.27.67-.36 1.020-.24 1.120.37 2.330.57 3.570.57.55 0 1 .45 1 1V20c0 .55-.45 1-1 1-9.390 0-17-7.610-17-17 0-.55.45-1 1-1h3.500c.55 0 1 .45 1 1 0 1.250.2 2.450.57 3.570.11.35.03.74-.25 1.020l-2.200 2.200z"/><path fill="#f28a14" d="M14 3h7v7h-2V6.400l-5.300 5.300-1.400-1.400L17.600 5H14z"/></svg>
<div class="cnt" style="left:54.300px">1</div>
<svg class="ic" style="left:69.3px;top:3.900px;width:10.800px;height:10.800px" viewBox="0 0 24 24"><path fill="#1fc85f" d="M6.620 10.790c1.440 2.830 3.760 5.140 6.590 6.590l2.200-2.200c.27-.27.67-.36 1.020-.24 1.120.37 2.330.57 3.570.57.55 0 1 .45 1 1V20c0 .55-.45 1-1 1-9.390 0-17-7.610-17-17 0-.55.45-1 1-1h3.500c.55 0 1 .45 1 1 0 1.250.2 2.450.57 3.570.11.35.03.74-.25 1.020l-2.200 2.200z"/><path fill="#1fc85f" d="M21 4.400L19.600 3 14 8.600V5h-2v7h7v-2h-3.600z"/></svg>
<div class="cnt" style="left:81.600px">0</div>
<div class="nm" style="left:7.6px"><div>テストユーザー</div></div>
<div class="sel "><div class="t">オフライン(Offline)</div><svg class="ic" style="left:98.8px;top:8.5px;width:5.600px;height:3.600px" viewBox="0 0 5.600 3.600"><path d="M.7.700l2.100 2.100L4.900.700" fill="none" stroke="#444" stroke-width="1.100"/></svg></div>
<div class="box"></div></div></div>
<div class="card" style="left:42.80px;top:407.90px"><div class="in">
<svg class="ic" style="left:41.5px;top:3.900px;width:10.800px;height:10.800px" viewBox="0 0 24 24"><path fill="#f28a14" d="M6.620 10.790c1.440 2.830 3.760 5.140 6.590 6.590l2.200-2.200c.27-.27.67-.36 1.020-.24 1.120.37 2.330.57 3.570.57.55 0 1 .45 1 1V20c0 .55-.45 1-1 1-9.390 0-17-7.610-17-17 0-.55.45-1 1-1h3.500c.55 0 1 .45 1 1 0 1.250.2 2.450.57 3.570.11.35.03.74-.25 1.020l-2.200 2.200z"/><path fill="#f28a14" d="M14 3h7v7h-2V6.400l-5.300 5.300-1.400-1.400L17.600 5H14z"/></svg>
<div class="cnt" style="left:54.300px">0</div>
<svg class="ic" style="left:69.3px;top:3.900px;width:10.800px;height:10.800px" viewBox="0 0 24 24"><path fill="#1fc85f" d="M6.620 10.790c1.440 2.830 3.760 5.140 6.590 6.590l2.200-2.200c.27-.27.67-.36 1.020-.24 1.120.37 2.330.57 3.570.57.55 0 1 .45 1 1V20c0 .55-.45 1-1 1-9.390 0-17-7.610-17-17 0-.55.45-1 1-1h3.500c.55 0 1 .45 1 1 0 1.250.2 2.450.57 3.570.11.35.03.74-.25 1.020l-2.200 2.200z"/><path fill="#1fc85f" d="M21 4.400L19.600 3 14 8.600V5h-2v7h7v-2h-3.600z"/></svg>
<div class="cnt" style="left:81.600px">0</div>
<div class="nm" style="left:6px"><div>デモオペレータ</div></div>
<div class="sel "><div class="t">オフライン(Offline)</div><svg class="ic" style="left:98.8px;top:8.5px;width:5.600px;height:3.600px" viewBox="0 0 5.600 3.600"><path d="M.7.700l2.100 2.100L4.900.700" fill="none" stroke="#444" stroke-width="1.100"/></svg></div>
<div class="box"></div></div></div>
<div class="card" style="left:182.30px;top:407.90px"><div class="in">
<svg class="ic" style="left:41.5px;top:3.900px;width:10.800px;height:10.800px" viewBox="0 0 24 24"><path fill="#f28a14" d="M6.620 10.790c1.440 2.830 3.760 5.140 6.590 6.590l2.200-2.200c.27-.27.67-.36 1.020-.24 1.120.37 2.330.57 3.570.57.55 0 1 .45 1 1V20c0 .55-.45 1-1 1-9.390 0-17-7.610-17-17 0-.55.45-1 1-1h3.500c.55 0 1 .45 1 1 0 1.250.2 2.450.57 3.570.11.35.03.74-.25 1.020l-2.200 2.200z"/><path fill="#f28a14" d="M14 3h7v7h-2V6.400l-5.300 5.300-1.400-1.400L17.600 5H14z"/></svg>
<div class="cnt" style="left:54.300px">0</div>
<svg class="ic" style="left:69.3px;top:3.900px;width:10.800px;height:10.800px" viewBox="0 0 24 24"><path fill="#1fc85f" d="M6.620 10.790c1.440 2.830 3.760 5.140 6.590 6.590l2.200-2.200c.27-.27.67-.36 1.020-.24 1.120.37 2.330.57 3.570.57.55 0 1 .45 1 1V20c0 .55-.45 1-1 1-9.390 0-17-7.610-17-17 0-.55.45-1 1-1h3.500c.55 0 1 .45 1 1 0 1.250.2 2.450.57 3.570.11.35.03.74-.25 1.020l-2.200 2.200z"/><path fill="#1fc85f" d="M21 4.400L19.600 3 14 8.600V5h-2v7h7v-2h-3.600z"/></svg>
<div class="cnt" style="left:81.600px">0</div>
<div class="nm" style="left:7.6px"><div>テストユーザー</div></div>
<div class="sel "><div class="t">オフライン(Offline)</div><svg class="ic" style="left:98.8px;top:8.5px;width:5.600px;height:3.600px" viewBox="0 0 5.600 3.600"><path d="M.7.700l2.100 2.100L4.900.700" fill="none" stroke="#444" stroke-width="1.100"/></svg></div>
<div class="box"></div></div></div>
<div class="card" style="left:321.80px;top:407.90px"><div class="in">
<svg class="ic" style="left:41.5px;top:3.900px;width:10.800px;height:10.800px" viewBox="0 0 24 24"><path fill="#f28a14" d="M6.620 10.790c1.440 2.830 3.760 5.140 6.590 6.590l2.200-2.200c.27-.27.67-.36 1.020-.24 1.120.37 2.330.57 3.570.57.55 0 1 .45 1 1V20c0 .55-.45 1-1 1-9.390 0-17-7.610-17-17 0-.55.45-1 1-1h3.500c.55 0 1 .45 1 1 0 1.250.2 2.450.57 3.570.11.35.03.74-.25 1.020l-2.200 2.200z"/><path fill="#f28a14" d="M14 3h7v7h-2V6.400l-5.300 5.300-1.400-1.400L17.600 5H14z"/></svg>
<div class="cnt" style="left:54.300px">0</div>
<svg class="ic" style="left:69.3px;top:3.900px;width:10.800px;height:10.800px" viewBox="0 0 24 24"><path fill="#1fc85f" d="M6.620 10.790c1.440 2.830 3.760 5.140 6.590 6.590l2.200-2.200c.27-.27.67-.36 1.020-.24 1.120.37 2.330.57 3.570.57.55 0 1 .45 1 1V20c0 .55-.45 1-1 1-9.390 0-17-7.610-17-17 0-.55.45-1 1-1h3.500c.55 0 1 .45 1 1 0 1.250.2 2.450.57 3.570.11.35.03.74-.25 1.020l-2.200 2.200z"/><path fill="#1fc85f" d="M21 4.400L19.600 3 14 8.600V5h-2v7h7v-2h-3.600z"/></svg>
<div class="cnt" style="left:81.600px">0</div>
<div class="nm" style="left:7.6px"><div>テストユーザー</div></div>
<div class="sel "><div class="t">オフライン(Offline)</div><svg class="ic" style="left:98.8px;top:8.5px;width:5.600px;height:3.600px" viewBox="0 0 5.600 3.600"><path d="M.7.700l2.100 2.100L4.900.700" fill="none" stroke="#444" stroke-width="1.100"/></svg></div>
<div class="box"></div></div></div>
<div class="card" style="left:461.30px;top:407.90px"><div class="in">
<svg class="ic" style="left:41.5px;top:3.900px;width:10.800px;height:10.800px" viewBox="0 0 24 24"><path fill="#f28a14" d="M6.620 10.790c1.440 2.830 3.760 5.140 6.590 6.590l2.200-2.200c.27-.27.67-.36 1.020-.24 1.120.37 2.330.57 3.570.57.55 0 1 .45 1 1V20c0 .55-.45 1-1 1-9.390 0-17-7.610-17-17 0-.55.45-1 1-1h3.500c.55 0 1 .45 1 1 0 1.250.2 2.450.57 3.570.11.35.03.74-.25 1.020l-2.200 2.200z"/><path fill="#f28a14" d="M14 3h7v7h-2V6.400l-5.300 5.300-1.400-1.400L17.600 5H14z"/></svg>
<div class="cnt" style="left:54.300px">0</div>
<svg class="ic" style="left:69.3px;top:3.900px;width:10.800px;height:10.800px" viewBox="0 0 24 24"><path fill="#1fc85f" d="M6.620 10.790c1.440 2.830 3.760 5.140 6.590 6.590l2.200-2.200c.27-.27.67-.36 1.020-.24 1.120.37 2.330.57 3.570.57.55 0 1 .45 1 1V20c0 .55-.45 1-1 1-9.390 0-17-7.610-17-17 0-.55.45-1 1-1h3.500c.55 0 1 .45 1 1 0 1.250.2 2.450.57 3.570.11.35.03.74-.25 1.020l-2.200 2.200z"/><path fill="#1fc85f" d="M21 4.400L19.600 3 14 8.600V5h-2v7h7v-2h-3.600z"/></svg>
<div class="cnt" style="left:81.600px">0</div>
<div class="nm" style="left:6px"><div>オペレーター1<br>&nbsp;&nbsp;&nbsp;Agent1</div></div>
<div class="sel "><div class="t">オフライン(Offline)</div><svg class="ic" style="left:98.8px;top:8.5px;width:5.600px;height:3.600px" viewBox="0 0 5.600 3.600"><path d="M.7.700l2.100 2.100L4.900.700" fill="none" stroke="#444" stroke-width="1.100"/></svg></div>
<div class="box"></div></div></div>
<div class="card" style="left:600.80px;top:407.90px"><div class="in">
<svg class="ic" style="left:41.5px;top:3.900px;width:10.800px;height:10.800px" viewBox="0 0 24 24"><path fill="#f28a14" d="M6.620 10.790c1.440 2.830 3.760 5.140 6.590 6.590l2.200-2.200c.27-.27.67-.36 1.020-.24 1.120.37 2.330.57 3.570.57.55 0 1 .45 1 1V20c0 .55-.45 1-1 1-9.390 0-17-7.610-17-17 0-.55.45-1 1-1h3.500c.55 0 1 .45 1 1 0 1.250.2 2.450.57 3.570.11.35.03.74-.25 1.020l-2.200 2.200z"/><path fill="#f28a14" d="M14 3h7v7h-2V6.400l-5.300 5.300-1.400-1.400L17.600 5H14z"/></svg>
<div class="cnt" style="left:54.300px">0</div>
<svg class="ic" style="left:69.3px;top:3.900px;width:10.800px;height:10.800px" viewBox="0 0 24 24"><path fill="#1fc85f" d="M6.620 10.790c1.440 2.830 3.760 5.140 6.590 6.590l2.200-2.200c.27-.27.67-.36 1.020-.24 1.120.37 2.330.57 3.570.57.55 0 1 .45 1 1V20c0 .55-.45 1-1 1-9.390 0-17-7.610-17-17 0-.55.45-1 1-1h3.500c.55 0 1 .45 1 1 0 1.250.2 2.450.57 3.570.11.35.03.74-.25 1.020l-2.200 2.200z"/><path fill="#1fc85f" d="M21 4.400L19.600 3 14 8.600V5h-2v7h7v-2h-3.600z"/></svg>
<div class="cnt" style="left:81.600px">0</div>
<div class="nm" style="left:6px"><div>オペレーター２<br><span style="padding-left:33px;font-size:6px;color:#777">.</span></div></div>
<div class="sel "><div class="t">オフライン(Offline)</div><svg class="ic" style="left:98.8px;top:8.5px;width:5.600px;height:3.600px" viewBox="0 0 5.600 3.600"><path d="M.7.700l2.100 2.100L4.900.700" fill="none" stroke="#444" stroke-width="1.100"/></svg></div>
<div class="box"></div></div></div>
<div class="card" style="left:740.30px;top:407.90px"><div class="in">
<svg class="ic" style="left:41.5px;top:3.900px;width:10.800px;height:10.800px" viewBox="0 0 24 24"><path fill="#f28a14" d="M6.620 10.790c1.440 2.830 3.760 5.140 6.590 6.590l2.200-2.200c.27-.27.67-.36 1.020-.24 1.120.37 2.330.57 3.570.57.55 0 1 .45 1 1V20c0 .55-.45 1-1 1-9.390 0-17-7.610-17-17 0-.55.45-1 1-1h3.500c.55 0 1 .45 1 1 0 1.250.2 2.450.57 3.570.11.35.03.74-.25 1.020l-2.200 2.200z"/><path fill="#f28a14" d="M14 3h7v7h-2V6.400l-5.300 5.300-1.400-1.400L17.600 5H14z"/></svg>
<div class="cnt" style="left:54.300px">0</div>
<svg class="ic" style="left:69.3px;top:3.900px;width:10.800px;height:10.800px" viewBox="0 0 24 24"><path fill="#1fc85f" d="M6.620 10.790c1.440 2.830 3.760 5.140 6.590 6.590l2.200-2.200c.27-.27.67-.36 1.020-.24 1.120.37 2.330.57 3.570.57.55 0 1 .45 1 1V20c0 .55-.45 1-1 1-9.390 0-17-7.610-17-17 0-.55.45-1 1-1h3.500c.55 0 1 .45 1 1 0 1.250.2 2.450.57 3.570.11.35.03.74-.25 1.020l-2.200 2.200z"/><path fill="#1fc85f" d="M21 4.400L19.600 3 14 8.600V5h-2v7h7v-2h-3.600z"/></svg>
<div class="cnt" style="left:81.600px">0</div>
<div class="nm" style="left:6px"><div>オペレータ３<br>Agent3</div></div>
<div class="sel "><div class="t">オフライン(Offline)</div><svg class="ic" style="left:98.8px;top:8.5px;width:5.600px;height:3.600px" viewBox="0 0 5.600 3.600"><path d="M.7.700l2.100 2.100L4.900.700" fill="none" stroke="#444" stroke-width="1.100"/></svg></div>
<div class="box"></div></div></div>
<div class="card" style="left:879.80px;top:407.90px"><div class="in">
<svg class="ic" style="left:41.5px;top:3.900px;width:10.800px;height:10.800px" viewBox="0 0 24 24"><path fill="#f28a14" d="M6.620 10.790c1.440 2.830 3.760 5.140 6.590 6.590l2.200-2.200c.27-.27.67-.36 1.020-.24 1.120.37 2.330.57 3.570.57.55 0 1 .45 1 1V20c0 .55-.45 1-1 1-9.390 0-17-7.610-17-17 0-.55.45-1 1-1h3.500c.55 0 1 .45 1 1 0 1.250.2 2.450.57 3.570.11.35.03.74-.25 1.020l-2.200 2.200z"/><path fill="#f28a14" d="M14 3h7v7h-2V6.400l-5.300 5.300-1.400-1.400L17.600 5H14z"/></svg>
<div class="cnt" style="left:54.300px">0</div>
<svg class="ic" style="left:69.3px;top:3.900px;width:10.800px;height:10.800px" viewBox="0 0 24 24"><path fill="#1fc85f" d="M6.620 10.790c1.440 2.830 3.760 5.140 6.590 6.590l2.200-2.200c.27-.27.67-.36 1.020-.24 1.120.37 2.330.57 3.570.57.55 0 1 .45 1 1V20c0 .55-.45 1-1 1-9.390 0-17-7.610-17-17 0-.55.45-1 1-1h3.500c.55 0 1 .45 1 1 0 1.250.2 2.450.57 3.570.11.35.03.74-.25 1.020l-2.200 2.200z"/><path fill="#1fc85f" d="M21 4.400L19.600 3 14 8.600V5h-2v7h7v-2h-3.600z"/></svg>
<div class="cnt" style="left:81.600px">0</div>
<div class="nm" style="left:7.6px"><div>テストユーザー</div></div>
<div class="sel "><div class="t">オフライン(Offline)</div><svg class="ic" style="left:98.8px;top:8.5px;width:5.600px;height:3.600px" viewBox="0 0 5.600 3.600"><path d="M.7.700l2.100 2.100L4.900.700" fill="none" stroke="#444" stroke-width="1.100"/></svg></div>
<div class="box"></div></div></div>
<div class="card" style="left:1019.30px;top:407.90px"><div class="in">
<svg class="ic" style="left:41.5px;top:3.900px;width:10.800px;height:10.800px" viewBox="0 0 24 24"><path fill="#f28a14" d="M6.620 10.790c1.440 2.830 3.760 5.140 6.590 6.590l2.200-2.200c.27-.27.67-.36 1.020-.24 1.120.37 2.330.57 3.570.57.55 0 1 .45 1 1V20c0 .55-.45 1-1 1-9.390 0-17-7.610-17-17 0-.55.45-1 1-1h3.500c.55 0 1 .45 1 1 0 1.250.2 2.450.57 3.570.11.35.03.74-.25 1.020l-2.200 2.200z"/><path fill="#f28a14" d="M14 3h7v7h-2V6.400l-5.300 5.300-1.400-1.400L17.600 5H14z"/></svg>
<div class="cnt" style="left:54.300px">0</div>
<svg class="ic" style="left:69.3px;top:3.900px;width:10.800px;height:10.800px" viewBox="0 0 24 24"><path fill="#1fc85f" d="M6.620 10.790c1.440 2.830 3.760 5.140 6.590 6.590l2.200-2.200c.27-.27.67-.36 1.020-.24 1.120.37 2.330.57 3.570.57.55 0 1 .45 1 1V20c0 .55-.45 1-1 1-9.390 0-17-7.610-17-17 0-.55.45-1 1-1h3.500c.55 0 1 .45 1 1 0 1.250.2 2.450.57 3.570.11.35.03.74-.25 1.020l-2.200 2.200z"/><path fill="#1fc85f" d="M21 4.400L19.600 3 14 8.600V5h-2v7h7v-2h-3.600z"/></svg>
<div class="cnt" style="left:81.600px">0</div>
<div class="nm" style="left:7.6px"><div>テストユーザー</div></div>
<div class="sel "><div class="t">オフライン(Offline)</div><svg class="ic" style="left:98.8px;top:8.5px;width:5.600px;height:3.600px" viewBox="0 0 5.600 3.600"><path d="M.7.700l2.100 2.100L4.900.700" fill="none" stroke="#444" stroke-width="1.100"/></svg></div>
<div class="box"></div></div></div>
<div class="card" style="left:42.80px;top:514.65px"><div class="in">
<svg class="ic" style="left:41.5px;top:3.900px;width:10.800px;height:10.800px" viewBox="0 0 24 24"><path fill="#f28a14" d="M6.620 10.790c1.440 2.830 3.760 5.140 6.590 6.590l2.200-2.200c.27-.27.67-.36 1.020-.24 1.120.37 2.330.57 3.570.57.55 0 1 .45 1 1V20c0 .55-.45 1-1 1-9.390 0-17-7.610-17-17 0-.55.45-1 1-1h3.500c.55 0 1 .45 1 1 0 1.250.2 2.450.57 3.570.11.35.03.74-.25 1.020l-2.200 2.200z"/><path fill="#f28a14" d="M14 3h7v7h-2V6.400l-5.300 5.300-1.400-1.400L17.600 5H14z"/></svg>
<div class="cnt" style="left:54.300px">0</div>
<svg class="ic" style="left:69.3px;top:3.900px;width:10.800px;height:10.800px" viewBox="0 0 24 24"><path fill="#1fc85f" d="M6.620 10.790c1.440 2.830 3.760 5.140 6.590 6.590l2.200-2.200c.27-.27.67-.36 1.020-.24 1.120.37 2.330.57 3.570.57.55 0 1 .45 1 1V20c0 .55-.45 1-1 1-9.390 0-17-7.610-17-17 0-.55.45-1 1-1h3.500c.55 0 1 .45 1 1 0 1.250.2 2.450.57 3.570.11.35.03.74-.25 1.020l-2.200 2.200z"/><path fill="#1fc85f" d="M21 4.400L19.600 3 14 8.600V5h-2v7h7v-2h-3.600z"/></svg>
<div class="cnt" style="left:81.600px">0</div>
<div class="nm" style="left:7.6px"><div>テストユーザー</div></div>
<div class="sel "><div class="t">オフライン(Offline)</div><svg class="ic" style="left:98.8px;top:8.5px;width:5.600px;height:3.600px" viewBox="0 0 5.600 3.600"><path d="M.7.700l2.100 2.100L4.900.700" fill="none" stroke="#444" stroke-width="1.100"/></svg></div>
<div class="box"></div></div></div>
<div class="card" style="left:182.30px;top:514.65px"><div class="in">
<svg class="ic" style="left:41.5px;top:3.900px;width:10.800px;height:10.800px" viewBox="0 0 24 24"><path fill="#f28a14" d="M6.620 10.790c1.440 2.830 3.760 5.140 6.590 6.590l2.200-2.200c.27-.27.67-.36 1.020-.24 1.120.37 2.330.57 3.570.57.55 0 1 .45 1 1V20c0 .55-.45 1-1 1-9.390 0-17-7.610-17-17 0-.55.45-1 1-1h3.500c.55 0 1 .45 1 1 0 1.250.2 2.450.57 3.570.11.35.03.74-.25 1.020l-2.200 2.200z"/><path fill="#f28a14" d="M14 3h7v7h-2V6.400l-5.300 5.300-1.400-1.400L17.600 5H14z"/></svg>
<div class="cnt" style="left:54.300px">0</div>
<svg class="ic" style="left:69.3px;top:3.900px;width:10.800px;height:10.800px" viewBox="0 0 24 24"><path fill="#1fc85f" d="M6.620 10.790c1.440 2.830 3.760 5.140 6.590 6.590l2.200-2.200c.27-.27.67-.36 1.020-.24 1.120.37 2.330.57 3.570.57.55 0 1 .45 1 1V20c0 .55-.45 1-1 1-9.390 0-17-7.610-17-17 0-.55.45-1 1-1h3.500c.55 0 1 .45 1 1 0 1.250.2 2.450.57 3.570.11.35.03.74-.25 1.020l-2.200 2.200z"/><path fill="#1fc85f" d="M21 4.400L19.600 3 14 8.600V5h-2v7h7v-2h-3.600z"/></svg>
<div class="cnt" style="left:81.600px">0</div>
<div class="nm" style="left:6px"><div>テストロジカル</div></div>
<div class="sel "><div class="t">オフライン(Offline)</div><svg class="ic" style="left:98.8px;top:8.5px;width:5.600px;height:3.600px" viewBox="0 0 5.600 3.600"><path d="M.7.700l2.100 2.100L4.900.700" fill="none" stroke="#444" stroke-width="1.100"/></svg></div>
<div class="box"></div></div></div>
<div class="card" style="left:321.80px;top:514.65px"><div class="in">
<svg class="ic" style="left:41.5px;top:3.900px;width:10.800px;height:10.800px" viewBox="0 0 24 24"><path fill="#f28a14" d="M6.620 10.790c1.440 2.830 3.760 5.140 6.590 6.590l2.200-2.200c.27-.27.67-.36 1.020-.24 1.120.37 2.330.57 3.570.57.55 0 1 .45 1 1V20c0 .55-.45 1-1 1-9.390 0-17-7.610-17-17 0-.55.45-1 1-1h3.500c.55 0 1 .45 1 1 0 1.250.2 2.450.57 3.570.11.35.03.74-.25 1.020l-2.200 2.200z"/><path fill="#f28a14" d="M14 3h7v7h-2V6.400l-5.300 5.300-1.400-1.400L17.600 5H14z"/></svg>
<div class="cnt" style="left:54.300px">0</div>
<svg class="ic" style="left:69.3px;top:3.900px;width:10.800px;height:10.800px" viewBox="0 0 24 24"><path fill="#1fc85f" d="M6.620 10.790c1.440 2.830 3.760 5.140 6.590 6.590l2.200-2.200c.27-.27.67-.36 1.020-.24 1.120.37 2.330.57 3.570.57.55 0 1 .45 1 1V20c0 .55-.45 1-1 1-9.390 0-17-7.610-17-17 0-.55.45-1 1-1h3.500c.55 0 1 .45 1 1 0 1.250.2 2.450.57 3.570.11.35.03.74-.25 1.020l-2.200 2.200z"/><path fill="#1fc85f" d="M21 4.400L19.600 3 14 8.600V5h-2v7h7v-2h-3.600z"/></svg>
<div class="cnt" style="left:81.600px">0</div>
<div class="nm" style="left:7.6px"><div>テストユーザー</div></div>
<div class="sel "><div class="t">オフライン(Offline)</div><svg class="ic" style="left:98.8px;top:8.5px;width:5.600px;height:3.600px" viewBox="0 0 5.600 3.600"><path d="M.7.700l2.100 2.100L4.900.700" fill="none" stroke="#444" stroke-width="1.100"/></svg></div>
<div class="box"></div></div></div>
<div class="card" style="left:461.30px;top:514.65px"><div class="in">
<svg class="ic" style="left:41.5px;top:3.900px;width:10.800px;height:10.800px" viewBox="0 0 24 24"><path fill="#f28a14" d="M6.620 10.790c1.440 2.830 3.760 5.140 6.590 6.590l2.200-2.200c.27-.27.67-.36 1.020-.24 1.120.37 2.330.57 3.570.57.55 0 1 .45 1 1V20c0 .55-.45 1-1 1-9.390 0-17-7.610-17-17 0-.55.45-1 1-1h3.500c.55 0 1 .45 1 1 0 1.250.2 2.450.57 3.570.11.35.03.74-.25 1.020l-2.200 2.200z"/><path fill="#f28a14" d="M14 3h7v7h-2V6.400l-5.300 5.300-1.400-1.400L17.600 5H14z"/></svg>
<div class="cnt" style="left:54.300px">0</div>
<svg class="ic" style="left:69.3px;top:3.900px;width:10.800px;height:10.800px" viewBox="0 0 24 24"><path fill="#1fc85f" d="M6.620 10.790c1.440 2.830 3.760 5.140 6.590 6.590l2.200-2.200c.27-.27.67-.36 1.020-.24 1.120.37 2.330.57 3.570.57.55 0 1 .45 1 1V20c0 .55-.45 1-1 1-9.390 0-17-7.610-17-17 0-.55.45-1 1-1h3.500c.55 0 1 .45 1 1 0 1.250.2 2.450.57 3.570.11.35.03.74-.25 1.020l-2.200 2.200z"/><path fill="#1fc85f" d="M21 4.400L19.600 3 14 8.600V5h-2v7h7v-2h-3.600z"/></svg>
<div class="cnt" style="left:81.600px">0</div>
<div class="nm" style="left:7.6px"><div>テストユーザー</div></div>
<div class="sel "><div class="t">オフライン(Offline)</div><svg class="ic" style="left:98.8px;top:8.5px;width:5.600px;height:3.600px" viewBox="0 0 5.600 3.600"><path d="M.7.700l2.100 2.100L4.900.700" fill="none" stroke="#444" stroke-width="1.100"/></svg></div>
<div class="box"></div></div></div>
<div class="card" style="left:600.80px;top:514.65px"><div class="in">
<svg class="ic" style="left:41.5px;top:3.900px;width:10.800px;height:10.800px" viewBox="0 0 24 24"><path fill="#f28a14" d="M6.620 10.790c1.440 2.830 3.760 5.140 6.590 6.590l2.200-2.200c.27-.27.67-.36 1.020-.24 1.120.37 2.330.57 3.570.57.55 0 1 .45 1 1V20c0 .55-.45 1-1 1-9.390 0-17-7.610-17-17 0-.55.45-1 1-1h3.500c.55 0 1 .45 1 1 0 1.250.2 2.450.57 3.570.11.35.03.74-.25 1.020l-2.200 2.200z"/><path fill="#f28a14" d="M14 3h7v7h-2V6.400l-5.300 5.300-1.400-1.400L17.600 5H14z"/></svg>
<div class="cnt" style="left:54.300px">0</div>
<svg class="ic" style="left:69.3px;top:3.900px;width:10.800px;height:10.800px" viewBox="0 0 24 24"><path fill="#1fc85f" d="M6.620 10.790c1.440 2.830 3.760 5.140 6.590 6.590l2.200-2.200c.27-.27.67-.36 1.020-.24 1.120.37 2.330.57 3.570.57.55 0 1 .45 1 1V20c0 .55-.45 1-1 1-9.390 0-17-7.610-17-17 0-.55.45-1 1-1h3.500c.55 0 1 .45 1 1 0 1.250.2 2.450.57 3.570.11.35.03.74-.25 1.020l-2.200 2.200z"/><path fill="#1fc85f" d="M21 4.400L19.600 3 14 8.600V5h-2v7h7v-2h-3.600z"/></svg>
<div class="cnt" style="left:81.600px">0</div>
<div class="nm" style="left:7.6px"><div>テストユーザー</div></div>
<div class="sel "><div class="t">オフライン(Offline)</div><svg class="ic" style="left:98.8px;top:8.5px;width:5.600px;height:3.600px" viewBox="0 0 5.600 3.600"><path d="M.7.700l2.100 2.100L4.900.700" fill="none" stroke="#444" stroke-width="1.100"/></svg></div>
<div class="box"></div></div></div>
<div class="card" style="left:740.30px;top:514.65px"><div class="in">
<svg class="ic" style="left:41.5px;top:3.900px;width:10.800px;height:10.800px" viewBox="0 0 24 24"><path fill="#f28a14" d="M6.620 10.790c1.440 2.830 3.760 5.140 6.590 6.590l2.200-2.200c.27-.27.67-.36 1.020-.24 1.120.37 2.330.57 3.570.57.55 0 1 .45 1 1V20c0 .55-.45 1-1 1-9.390 0-17-7.610-17-17 0-.55.45-1 1-1h3.500c.55 0 1 .45 1 1 0 1.250.2 2.450.57 3.570.11.35.03.74-.25 1.020l-2.200 2.200z"/><path fill="#f28a14" d="M14 3h7v7h-2V6.400l-5.300 5.300-1.400-1.400L17.600 5H14z"/></svg>
<div class="cnt" style="left:54.300px">0</div>
<svg class="ic" style="left:69.3px;top:3.900px;width:10.800px;height:10.800px" viewBox="0 0 24 24"><path fill="#1fc85f" d="M6.620 10.790c1.440 2.830 3.760 5.140 6.590 6.590l2.200-2.200c.27-.27.67-.36 1.020-.24 1.120.37 2.330.57 3.570.57.55 0 1 .45 1 1V20c0 .55-.45 1-1 1-9.390 0-17-7.610-17-17 0-.55.45-1 1-1h3.500c.55 0 1 .45 1 1 0 1.250.2 2.450.57 3.570.11.35.03.74-.25 1.020l-2.200 2.200z"/><path fill="#1fc85f" d="M21 4.400L19.600 3 14 8.600V5h-2v7h7v-2h-3.600z"/></svg>
<div class="cnt" style="left:81.600px">0</div>
<div class="nm" style="left:7.6px"><div>テストユーザー</div></div>
<div class="sel "><div class="t">オフライン(Offline)</div><svg class="ic" style="left:98.8px;top:8.5px;width:5.600px;height:3.600px" viewBox="0 0 5.600 3.600"><path d="M.7.700l2.100 2.100L4.900.700" fill="none" stroke="#444" stroke-width="1.100"/></svg></div>
<div class="box"></div></div></div>
<div class="card" style="left:879.80px;top:514.65px"><div class="in">
<svg class="ic" style="left:41.5px;top:3.900px;width:10.800px;height:10.800px" viewBox="0 0 24 24"><path fill="#f28a14" d="M6.620 10.790c1.440 2.830 3.760 5.140 6.590 6.590l2.200-2.200c.27-.27.67-.36 1.020-.24 1.120.37 2.330.57 3.570.57.55 0 1 .45 1 1V20c0 .55-.45 1-1 1-9.390 0-17-7.610-17-17 0-.55.45-1 1-1h3.500c.55 0 1 .45 1 1 0 1.250.2 2.450.57 3.570.11.35.03.74-.25 1.020l-2.200 2.200z"/><path fill="#f28a14" d="M14 3h7v7h-2V6.400l-5.300 5.300-1.400-1.400L17.600 5H14z"/></svg>
<div class="cnt" style="left:54.300px">0</div>
<svg class="ic" style="left:69.3px;top:3.900px;width:10.800px;height:10.800px" viewBox="0 0 24 24"><path fill="#1fc85f" d="M6.620 10.790c1.440 2.830 3.760 5.140 6.590 6.590l2.200-2.200c.27-.27.67-.36 1.020-.24 1.120.37 2.330.57 3.570.57.55 0 1 .45 1 1V20c0 .55-.45 1-1 1-9.390 0-17-7.610-17-17 0-.55.45-1 1-1h3.500c.55 0 1 .45 1 1 0 1.250.2 2.450.57 3.570.11.35.03.74-.25 1.020l-2.200 2.200z"/><path fill="#1fc85f" d="M21 4.400L19.600 3 14 8.600V5h-2v7h7v-2h-3.600z"/></svg>
<div class="cnt" style="left:81.600px">0</div>
<div class="nm" style="left:7.6px"><div>テストユーザー</div></div>
<div class="sel "><div class="t">オフライン(Offline)</div><svg class="ic" style="left:98.8px;top:8.5px;width:5.600px;height:3.600px" viewBox="0 0 5.600 3.600"><path d="M.7.700l2.100 2.100L4.900.700" fill="none" stroke="#444" stroke-width="1.100"/></svg></div>
<div class="box"></div></div></div>
<div class="card" style="left:1019.30px;top:514.65px"><div class="in">
<svg class="ic" style="left:41.5px;top:3.900px;width:10.800px;height:10.800px" viewBox="0 0 24 24"><path fill="#f28a14" d="M6.620 10.790c1.440 2.830 3.760 5.140 6.590 6.590l2.200-2.200c.27-.27.67-.36 1.020-.24 1.120.37 2.330.57 3.570.57.55 0 1 .45 1 1V20c0 .55-.45 1-1 1-9.390 0-17-7.610-17-17 0-.55.45-1 1-1h3.500c.55 0 1 .45 1 1 0 1.250.2 2.450.57 3.570.11.35.03.74-.25 1.020l-2.200 2.200z"/><path fill="#f28a14" d="M14 3h7v7h-2V6.400l-5.300 5.300-1.400-1.400L17.600 5H14z"/></svg>
<div class="cnt" style="left:54.300px">0</div>
<svg class="ic" style="left:69.3px;top:3.900px;width:10.800px;height:10.800px" viewBox="0 0 24 24"><path fill="#1fc85f" d="M6.620 10.790c1.440 2.830 3.760 5.140 6.590 6.590l2.200-2.200c.27-.27.67-.36 1.020-.24 1.120.37 2.330.57 3.570.57.55 0 1 .45 1 1V20c0 .55-.45 1-1 1-9.390 0-17-7.610-17-17 0-.55.45-1 1-1h3.500c.55 0 1 .45 1 1 0 1.250.2 2.450.57 3.570.11.35.03.74-.25 1.020l-2.200 2.200z"/><path fill="#1fc85f" d="M21 4.400L19.600 3 14 8.600V5h-2v7h7v-2h-3.600z"/></svg>
<div class="cnt" style="left:81.600px">0</div>
<div class="nm" style="left:7.6px"><div>テストユーザー</div></div>
<div class="sel "><div class="t">オフライン(Offline)</div><svg class="ic" style="left:98.8px;top:8.5px;width:5.600px;height:3.600px" viewBox="0 0 5.600 3.600"><path d="M.7.700l2.100 2.100L4.900.700" fill="none" stroke="#444" stroke-width="1.100"/></svg></div>
<div class="box"></div></div></div>
<svg class="ic" style="left:1158.300px;top:194.600px;width:8.400px;height:6.600px" viewBox="0 0 8.400 6.600"><path d="M4.200 0l4.200 6.600H0z" fill="#8c8a92"/></svg>
<div class="abs" style="left:1158.400px;top:205.800px;width:7.600px;height:368.500px;border-radius:3.800px;background:#8c8a92"></div>
</body></html>
